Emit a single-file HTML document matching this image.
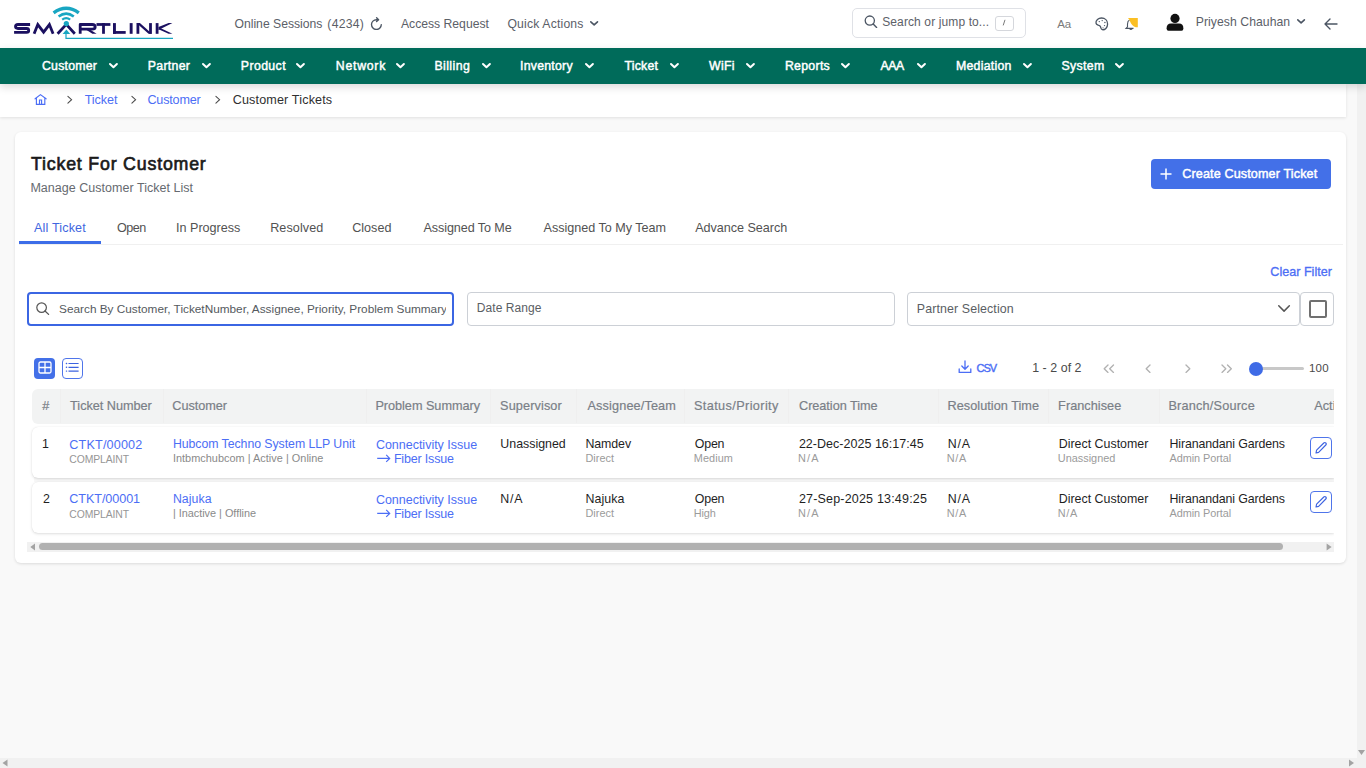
<!DOCTYPE html>
<html><head><meta charset="utf-8"><style>
html,body{margin:0;padding:0;width:1366px;height:768px;overflow:hidden;background:#f9f9f9;font-family:"Liberation Sans", sans-serif}
.a{position:absolute;display:block}
.t{position:absolute;white-space:pre;line-height:20px;height:20px;z-index:3}
svg.a{z-index:3}
</style></head><body>
<div class=a style='left:1357px;top:84px;width:9px;height:684px;background:#f1f1f1'></div><div class=a style='left:0;top:758px;width:1366px;height:10px;background:#f1f1f1'></div><svg class=a style='left:1357px;top:748px' width='9' height='8'><path d='M1 2 L8 2 L4.5 7 Z' fill='#a3a3a3'/></svg><svg class=a style='left:0;top:758px' width='10' height='10'><path d='M2.5 5 L7.5 1.5 L7.5 8.5 Z' fill='#a3a3a3'/></svg><svg class=a style='left:1346px;top:758px' width='10' height='10'><path d='M8 5 L3 1.5 L3 8.5 Z' fill='#a3a3a3'/></svg><div class=a style='left:0;top:0;width:1366px;height:48px;background:#fff'></div><div class=a style='left:0;top:48px;width:1366px;height:36px;background:#006b5a;box-shadow:0 3px 8px rgba(0,0,0,.15);z-index:2'></div><div class=a style='left:0;top:84px;width:1346px;height:33px;background:#fff;box-shadow:0 1px 3px rgba(0,0,0,.10)'></div><div class=a style='left:15px;top:132px;width:1331px;height:431px;background:#fff;border-radius:6px;box-shadow:0 1px 3px rgba(0,0,0,.12)'></div><svg class=a style='left:0;top:0' width='190' height='48' viewBox='0 0 190 48'>
<g fill='none' stroke='#1b1060' stroke-width='2.8' stroke-linejoin='round' stroke-linecap='butt'>
<path d='M30.1 24.5 H18 Q15.5 24.5 15.5 26.6 Q15.5 28.5 18 28.5 H26.6 Q28.7 28.5 28.7 30.5 Q28.7 32.4 26.6 32.4 H14.1'/>
<path d='M34.1 33.8 L37.8 24.6 L43.6 32.2 L49.4 24.6 L53.1 33.8' stroke-linejoin='miter' stroke-miterlimit='3'/>
<path d='M57.6 33.8 L66.3 24.4 L74.8 33.8'/>
<path d='M80.2 33.8 V24.5 H92.2 Q95.2 24.5 95.2 27 Q95.2 29.2 92.2 29.2 H81.5'/>
</g>
<g fill='#1b1060'>
<path d='M86.6 30 H90.6 L96.6 33.8 H92.4 Z'/>
<rect x='96.5' y='23.1' width='13.9' height='2.75'/><rect x='102.1' y='23.1' width='2.8' height='10.7'/>
<rect x='113' y='23.1' width='2.9' height='10.7'/><rect x='113' y='31.05' width='12.7' height='2.75'/>
<rect x='129.7' y='23.1' width='2.9' height='10.7'/>
<rect x='136.5' y='23.1' width='2.8' height='10.7'/><rect x='149.1' y='23.1' width='2.8' height='10.7'/>
<path d='M136.5 23.1 H139.9 L151.9 33.8 H148.5 Z'/>
<rect x='155.7' y='23.1' width='2.8' height='10.7'/>
<path d='M158.5 27.1 L168.6 23.1 H172.4 L158.5 29.9 Z'/>
<path d='M160.8 28.2 L172.4 33.8 H168.6 L158.5 29.2 Z'/>
</g>
<g fill='#19a6c2'>
<circle cx='66.3' cy='23.6' r='2.6'/>
<path d='M62.6 34 L66.4 29.6 L70.2 34 Z'/>
</g>
<g fill='none' stroke='#19a6c2' stroke-linecap='butt'>
<path d='M53.6 12.9 Q66.2 3.8 78.8 12.9' stroke-width='3.4'/>
<path d='M58.6 16.5 Q66.2 10.8 73.8 16.5' stroke-width='2.6'/>
<path d='M62.2 19.6 Q66.2 16.8 70.2 19.6' stroke-width='2.2'/>
<path d='M66 34 V38.3 H173' stroke-width='1.2'/>
</g></svg><svg class=a style='left:369px;top:15px' width='15' height='15' viewBox='0 0 15 15'><path d='M12.3 9.6 A4.9 4.9 0 1 1 7.4 4.7 H9.3 M7.6 2.8 L9.6 4.7 L7.6 6.6' fill='none' stroke='#4b5563' stroke-width='1.35' stroke-linecap='round' stroke-linejoin='round'/></svg><svg class=a style='left:588.50px;top:20.20px' width='10.3' height='6.7' viewBox='-1 -1 10.3 6.7'><path d='M0.8 0.8 L4.15 3.9000000000000004 L7.500000000000001 0.8' fill='none' stroke='#4b5563' stroke-width='1.6' stroke-linecap='round' stroke-linejoin='round'/></svg><div class=a style='left:852px;top:8px;width:172px;height:28px;border:1px solid #dfe1e6;border-radius:5px;background:#fff'></div><svg class=a style='left:864px;top:15px' width='14' height='13' viewBox='0 0 14 13'><circle cx='5.8' cy='5.6' r='4.6' fill='none' stroke='#4b5563' stroke-width='1.3'/><path d='M9.2 9 L12.6 12.4' stroke='#4b5563' stroke-width='1.4' stroke-linecap='round'/></svg><div class=a style='left:994.5px;top:15.5px;width:17px;height:13px;border:1px solid #d5d7dc;border-radius:3px;background:#fff'></div><svg class=a style='left:1000px;top:18px' width='8' height='9'><path d='M5 1.8 L3.2 7.4' stroke='#6a6a6a' stroke-width='0.9'/></svg><svg class=a style='left:1094px;top:17px' width='15' height='14' viewBox='0 0 15 14'>
<path d='M2 6.2 C1.5 3 4.5 1 7.5 1 C11 1 13.6 3.3 13.6 7 C13.6 10.7 10.8 13.2 8.3 12.7 C6.6 12.4 7.2 10.2 6 9 C4.6 7.6 2.3 8.5 2 6.2 Z' fill='none' stroke='#4b5563' stroke-width='1.3'/>
<circle cx='5.3' cy='4.6' r='.7' fill='#4b5563'/><circle cx='8.2' cy='3.6' r='.7' fill='#4b5563'/><circle cx='10.9' cy='5.5' r='.7' fill='#4b5563'/><circle cx='10.5' cy='8.6' r='.7' fill='#4b5563'/><circle cx='9' cy='10.8' r='.6' fill='#4b5563'/></svg><svg class=a style='left:1124px;top:16px' width='16' height='15' viewBox='0 0 16 15'>
<path d='M5.5 4 Q3.5 5 3.5 8.2 V10.8 L2 12.4 H9.5' fill='none' stroke='#4b5563' stroke-width='1.1'/>
<path d='M5.6 12.6 Q6.9 14.4 8.2 12.6' fill='none' stroke='#4b5563' stroke-width='1.1'/>
<path d='M4 1.9 H13.8 V11.3 H11.8 Q8 11 5.2 3.6 Z' fill='#fbbf24'/></svg><svg class=a style='left:1166px;top:13px' width='18' height='18' viewBox='0 0 18 18'>
<circle cx='9' cy='5.4' r='4.6' fill='#111'/><path d='M0.6 15.4 Q0.6 10.6 5 10.6 H13 Q17.4 10.6 17.4 15.4 Q17.4 17.8 15.6 17.8 H2.4 Q0.6 17.8 0.6 15.4 Z' fill='#111'/></svg><svg class=a style='left:1296.00px;top:18.30px' width='10.2' height='6.6' viewBox='-1 -1 10.2 6.6'><path d='M0.8 0.8 L4.1 3.8 L7.3999999999999995 0.8' fill='none' stroke='#4b5563' stroke-width='1.6' stroke-linecap='round' stroke-linejoin='round'/></svg><svg class=a style='left:1324px;top:18px' width='14' height='12' viewBox='0 0 14 12'><path d='M1 6 H13 M6 1 L1 6 L6 11' fill='none' stroke='#4b5563' stroke-width='1.4' stroke-linecap='round' stroke-linejoin='round'/></svg><svg class=a style='z-index:4;left:107.70px;top:62.00px' width='10.9' height='7.3' viewBox='-1 -1 10.9 7.3'><path d='M1.0 1.0 L4.45 4.3 L7.9 1.0' fill='none' stroke='#ffffff' stroke-width='2.0' stroke-linecap='round' stroke-linejoin='round'/></svg><svg class=a style='z-index:4;left:201.00px;top:62.00px' width='10.9' height='7.3' viewBox='-1 -1 10.9 7.3'><path d='M1.0 1.0 L4.45 4.3 L7.9 1.0' fill='none' stroke='#ffffff' stroke-width='2.0' stroke-linecap='round' stroke-linejoin='round'/></svg><svg class=a style='z-index:4;left:295.00px;top:62.00px' width='10.9' height='7.3' viewBox='-1 -1 10.9 7.3'><path d='M1.0 1.0 L4.45 4.3 L7.9 1.0' fill='none' stroke='#ffffff' stroke-width='2.0' stroke-linecap='round' stroke-linejoin='round'/></svg><svg class=a style='z-index:4;left:395.00px;top:62.00px' width='10.9' height='7.3' viewBox='-1 -1 10.9 7.3'><path d='M1.0 1.0 L4.45 4.3 L7.9 1.0' fill='none' stroke='#ffffff' stroke-width='2.0' stroke-linecap='round' stroke-linejoin='round'/></svg><svg class=a style='z-index:4;left:481.00px;top:62.00px' width='10.9' height='7.3' viewBox='-1 -1 10.9 7.3'><path d='M1.0 1.0 L4.45 4.3 L7.9 1.0' fill='none' stroke='#ffffff' stroke-width='2.0' stroke-linecap='round' stroke-linejoin='round'/></svg><svg class=a style='z-index:4;left:584.00px;top:62.00px' width='10.9' height='7.3' viewBox='-1 -1 10.9 7.3'><path d='M1.0 1.0 L4.45 4.3 L7.9 1.0' fill='none' stroke='#ffffff' stroke-width='2.0' stroke-linecap='round' stroke-linejoin='round'/></svg><svg class=a style='z-index:4;left:669.00px;top:62.00px' width='10.9' height='7.3' viewBox='-1 -1 10.9 7.3'><path d='M1.0 1.0 L4.45 4.3 L7.9 1.0' fill='none' stroke='#ffffff' stroke-width='2.0' stroke-linecap='round' stroke-linejoin='round'/></svg><svg class=a style='z-index:4;left:745.00px;top:62.00px' width='10.9' height='7.3' viewBox='-1 -1 10.9 7.3'><path d='M1.0 1.0 L4.45 4.3 L7.9 1.0' fill='none' stroke='#ffffff' stroke-width='2.0' stroke-linecap='round' stroke-linejoin='round'/></svg><svg class=a style='z-index:4;left:840.00px;top:62.00px' width='10.9' height='7.3' viewBox='-1 -1 10.9 7.3'><path d='M1.0 1.0 L4.45 4.3 L7.9 1.0' fill='none' stroke='#ffffff' stroke-width='2.0' stroke-linecap='round' stroke-linejoin='round'/></svg><svg class=a style='z-index:4;left:915.60px;top:62.00px' width='10.9' height='7.3' viewBox='-1 -1 10.9 7.3'><path d='M1.0 1.0 L4.45 4.3 L7.9 1.0' fill='none' stroke='#ffffff' stroke-width='2.0' stroke-linecap='round' stroke-linejoin='round'/></svg><svg class=a style='z-index:4;left:1022.00px;top:62.00px' width='10.9' height='7.3' viewBox='-1 -1 10.9 7.3'><path d='M1.0 1.0 L4.45 4.3 L7.9 1.0' fill='none' stroke='#ffffff' stroke-width='2.0' stroke-linecap='round' stroke-linejoin='round'/></svg><svg class=a style='z-index:4;left:1114.30px;top:62.00px' width='10.9' height='7.3' viewBox='-1 -1 10.9 7.3'><path d='M1.0 1.0 L4.45 4.3 L7.9 1.0' fill='none' stroke='#ffffff' stroke-width='2.0' stroke-linecap='round' stroke-linejoin='round'/></svg><svg class=a style='left:28px;top:88px' width='24' height='24' viewBox='0 0 24 24'>
<path d='M7.1 10.8 L12.45 6.6 L18.1 10.8 M8.4 10 V16.4 H16.8 V10 M11.5 16.4 V12 H13.6 V16.4' fill='none' stroke='#4c6ef5' stroke-width='1.15' stroke-linejoin='miter' stroke-linecap='round'/></svg><svg class=a style='left:66.5px;top:95px' width='6' height='10' viewBox='0 0 6 10'><path d='M0.9 1.3 L4.6 4.7 L0.9 8.2' fill='none' stroke='#4a4a4a' stroke-width='1.05' stroke-linecap='round'/></svg><svg class=a style='left:130.8px;top:95px' width='6' height='10' viewBox='0 0 6 10'><path d='M0.9 1.3 L4.6 4.7 L0.9 8.2' fill='none' stroke='#4a4a4a' stroke-width='1.05' stroke-linecap='round'/></svg><svg class=a style='left:215px;top:95px' width='6' height='10' viewBox='0 0 6 10'><path d='M0.9 1.3 L4.6 4.7 L0.9 8.2' fill='none' stroke='#4a4a4a' stroke-width='1.05' stroke-linecap='round'/></svg><div class=a style='left:1151px;top:159px;width:180px;height:30px;background:#4370e8;border-radius:4px'></div><svg class=a style='left:1160px;top:168px' width='12' height='12'><path d='M6 0.5 V11.5 M0.5 6 H11.5' stroke='#fff' stroke-width='1.5'/></svg><div class=a style='left:19px;top:244px;width:1324px;height:1px;background:#f0f0f0'></div><div class=a style='left:19px;top:241px;width:82px;height:3px;background:#3d6de8'></div><div class=a style='left:27px;top:291.5px;width:423px;height:30.5px;border:2px solid #3b66e3;border-radius:4px;background:#fff'></div><svg class=a style='left:36px;top:301.5px' width='14' height='14' viewBox='0 0 14 14'><circle cx='5.6' cy='5.6' r='4.8' fill='none' stroke='#555' stroke-width='1.2'/><path d='M9 9 L12.6 12.4' stroke='#555' stroke-width='1.3' stroke-linecap='round'/></svg><div class=a style='left:467px;top:291.5px;width:425.5px;height:32.5px;border:1px solid #ccd0d6;border-radius:4px;background:#fff'></div><div class=a style='left:906.5px;top:291.5px;width:391.5px;height:32.5px;border:1px solid #ccd0d6;border-radius:4px;background:#fff'></div><div class=a style='left:1300.2px;top:291.5px;width:31.6px;height:32.5px;border:1px solid #ccd0d6;border-radius:4px;background:#fff'></div><div class=a style='left:1309px;top:300px;width:14px;height:14px;border:2.2px solid #707070;border-radius:2px'></div><svg class=a style='left:1276.90px;top:303.90px' width='14.1' height='8.9' viewBox='-1 -1 14.1 8.9'><path d='M0.75 0.75 L6.05 6.15 L11.35 0.75' fill='none' stroke='#555' stroke-width='1.5' stroke-linecap='round' stroke-linejoin='round'/></svg><div class=a style='left:33.5px;top:357.7px;width:21.5px;height:21.5px;background:#4370e8;border-radius:4px'></div><svg class=a style='left:37.5px;top:361px' width='14' height='13' viewBox='0 0 14 13'><rect x='1' y='1' width='12' height='11' rx='1.5' fill='none' stroke='#fff' stroke-width='1.3'/><path d='M7 1 V12 M1 6.5 H13' stroke='#fff' stroke-width='1.3'/></svg><div class=a style='left:62px;top:358px;width:18.5px;height:19px;border:1px solid #4f75ea;border-radius:4px;background:#fff'></div><svg class=a style='left:65px;top:362px' width='15' height='11' viewBox='0 0 15 11'><path d='M1.4 1.5 H1.6 M1.4 5.3 H1.6 M1.4 9.1 H1.6' stroke='#3d63e0' stroke-width='1.4' stroke-linecap='round'/><path d='M3.5 1.5 H13.6 M3.5 5.3 H13.6 M3.5 9.1 H13.6' stroke='#3d63e0' stroke-width='1.2'/></svg><svg class=a style='left:958px;top:360px' width='14' height='14' viewBox='0 0 14 14'><path d='M7 1 V9 M3.8 6 L7 9.2 L10.2 6 M1.2 9 V12.4 H12.8 V9' fill='none' stroke='#4c6ef5' stroke-width='1.3' stroke-linecap='round' stroke-linejoin='round'/></svg><svg class=a style='left:1103.3px;top:364px' width='12' height='10' viewBox='0 0 12 10'><path d='M5 1 L1.2 4.7 L5 8.4 M10.5 1 L6.7 4.7 L10.5 8.4' fill='none' stroke='#b1b1b1' stroke-width='1.35' stroke-linecap='round' stroke-linejoin='round'/></svg><svg class=a style='left:1145px;top:364px' width='6' height='10' viewBox='0 0 6 10'><path d='M5 1 L1.2 4.7 L5 8.4' fill='none' stroke='#b1b1b1' stroke-width='1.35' stroke-linecap='round' stroke-linejoin='round'/></svg><svg class=a style='left:1185.3px;top:364px' width='6' height='10' viewBox='0 0 6 10'><path d='M1 1 L4.8 4.7 L1 8.4' fill='none' stroke='#b1b1b1' stroke-width='1.35' stroke-linecap='round' stroke-linejoin='round'/></svg><svg class=a style='left:1221px;top:364px' width='12' height='10' viewBox='0 0 12 10'><path d='M1 1 L4.8 4.7 L1 8.4 M6.5 1 L10.3 4.7 L6.5 8.4' fill='none' stroke='#b1b1b1' stroke-width='1.35' stroke-linecap='round' stroke-linejoin='round'/></svg><div class=a style='left:1256px;top:367px;width:48px;height:3px;background:#c8c8c8;border-radius:2px'></div><div class=a style='left:1248.6px;top:361.5px;width:14px;height:14px;background:#3f6be6;border-radius:50%'></div><div class=a style='left:32px;top:389px;width:1302px;height:34.5px;background:#f2f3f3;border-radius:6px 0 0 6px'></div><div class=a style='left:60px;top:389px;width:1px;height:34px;background:#efefef'></div><div class=a style='left:163px;top:389px;width:1px;height:34px;background:#efefef'></div><div class=a style='left:366px;top:389px;width:1px;height:34px;background:#efefef'></div><div class=a style='left:490px;top:389px;width:1px;height:34px;background:#efefef'></div><div class=a style='left:576px;top:389px;width:1px;height:34px;background:#efefef'></div><div class=a style='left:684px;top:389px;width:1px;height:34px;background:#efefef'></div><div class=a style='left:788px;top:389px;width:1px;height:34px;background:#efefef'></div><div class=a style='left:938px;top:389px;width:1px;height:34px;background:#efefef'></div><div class=a style='left:1048px;top:389px;width:1px;height:34px;background:#efefef'></div><div class=a style='left:1159px;top:389px;width:1px;height:34px;background:#efefef'></div><div class=a style='left:34px;top:477px;width:1300px;height:5px;background:#f8f8f8'></div><div class=a style='left:32px;top:427px;width:1302px;height:51px;background:#fff;border-radius:6px 0 0 6px;box-shadow:0 1px 3px rgba(0,0,0,.13),0 0 1px rgba(0,0,0,.10)'></div><div class=a style='left:32px;top:481.5px;width:1302px;height:51px;background:#fff;border-radius:6px 0 0 6px;box-shadow:0 1px 3px rgba(0,0,0,.13),0 0 1px rgba(0,0,0,.10)'></div><div class=a style='left:1334px;top:385px;width:11.5px;height:160px;background:#fff;z-index:5'></div><div class=a style='left:1310px;top:437px;width:20px;height:20px;border:1px solid #4f75ea;border-radius:4px;background:#fff'></div><svg class=a style='left:1313px;top:440px' width='16' height='16' viewBox='0 0 16 16'><path d='M3 13 L3.6 10.2 L10.8 3 Q11.8 2 12.8 3 Q13.8 4 12.8 5 L5.6 12.4 Z' fill='none' stroke='#3d63e0' stroke-width='1.15' stroke-linejoin='round'/></svg><div class=a style='left:1310px;top:491.3px;width:20px;height:20px;border:1px solid #4f75ea;border-radius:4px;background:#fff'></div><svg class=a style='left:1313px;top:494.3px' width='16' height='16' viewBox='0 0 16 16'><path d='M3 13 L3.6 10.2 L10.8 3 Q11.8 2 12.8 3 Q13.8 4 12.8 5 L5.6 12.4 Z' fill='none' stroke='#3d63e0' stroke-width='1.15' stroke-linejoin='round'/></svg><svg class=a style='left:376px;top:454px' width='16' height='10' viewBox='0 0 16 10'><path d='M1.2 4.4 H13.6 M10.2 0.9 L13.7 4.4 L10.2 7.9' fill='none' stroke='#4c6ef5' stroke-width='1.2'/></svg><svg class=a style='left:376px;top:508.7px' width='16' height='10' viewBox='0 0 16 10'><path d='M1.2 4.4 H13.6 M10.2 0.9 L13.7 4.4 L10.2 7.9' fill='none' stroke='#4c6ef5' stroke-width='1.2'/></svg><div class=a style='left:27px;top:542px;width:1307px;height:10px;background:#f1f1f1'></div><div class=a style='left:39px;top:543.2px;width:1244px;height:6.6px;background:#b1b1b1;border-radius:4px'></div><svg class=a style='left:28px;top:542px' width='10' height='10'><path d='M2.3 5 L7 1.6 L7 8.4 Z' fill='#a3a3a3'/></svg><svg class=a style='left:1323px;top:542px' width='10' height='10'><path d='M8.6 5 L3.6 1.6 L3.6 8.4 Z' fill='#a3a3a3'/></svg>
<div class=t style="left:234.50px;top:14.00px;font-size:12.2px;color:#5b6068;letter-spacing:-0.014px;">Online Sessions</div><div class=t style="left:327.30px;top:14.00px;font-size:12.2px;color:#5b6068;letter-spacing:0.28px;">(4234)</div><div class=t style="left:401.00px;top:14.00px;font-size:12.2px;color:#5b6068;letter-spacing:-0.015px;">Access Request</div><div class=t style="left:507.40px;top:14.00px;font-size:12.2px;color:#5b6068;letter-spacing:0.183px;">Quick Actions</div><div class=t style="left:882.20px;top:12.00px;font-size:12.0px;color:#5d6168;letter-spacing:0.116px;">Search or jump to...</div><div class=t style="left:1057.30px;top:14.00px;font-size:11.5px;color:#7a7a7a;letter-spacing:-0.2px;">Aa</div><div class=t style="left:1195.80px;top:12.00px;font-size:12.2px;color:#5b6068;letter-spacing:0.058px;">Priyesh Chauhan</div><div class=t style="left:42.00px;top:56.00px;font-size:12.3px;color:#ffffff;letter-spacing:0.228px;-webkit-text-stroke:0.45px #fff;">Customer</div><div class=t style="left:147.80px;top:56.00px;font-size:12.3px;color:#ffffff;letter-spacing:0.3px;-webkit-text-stroke:0.45px #fff;">Partner</div><div class=t style="left:240.80px;top:56.00px;font-size:12.3px;color:#ffffff;letter-spacing:0.4px;-webkit-text-stroke:0.45px #fff;">Product</div><div class=t style="left:335.80px;top:56.00px;font-size:12.3px;color:#ffffff;letter-spacing:0.734px;-webkit-text-stroke:0.45px #fff;">Network</div><div class=t style="left:434.40px;top:56.00px;font-size:12.3px;color:#ffffff;letter-spacing:0.434px;-webkit-text-stroke:0.45px #fff;">Billing</div><div class=t style="left:520.00px;top:56.00px;font-size:12.3px;color:#ffffff;letter-spacing:0.25px;-webkit-text-stroke:0.45px #fff;">Inventory</div><div class=t style="left:624.40px;top:56.00px;font-size:12.3px;color:#ffffff;letter-spacing:0.24px;-webkit-text-stroke:0.45px #fff;">Ticket</div><div class=t style="left:709.00px;top:56.00px;font-size:12.3px;color:#ffffff;letter-spacing:0.334px;-webkit-text-stroke:0.45px #fff;">WiFi</div><div class=t style="left:784.90px;top:56.00px;font-size:12.3px;color:#ffffff;letter-spacing:0.3px;-webkit-text-stroke:0.45px #fff;">Reports</div><div class=t style="left:880.40px;top:56.00px;font-size:12.3px;color:#ffffff;letter-spacing:-0.4px;-webkit-text-stroke:0.45px #fff;">AAA</div><div class=t style="left:956.00px;top:56.00px;font-size:12.3px;color:#ffffff;letter-spacing:0.25px;-webkit-text-stroke:0.45px #fff;">Mediation</div><div class=t style="left:1061.50px;top:56.00px;font-size:12.3px;color:#ffffff;letter-spacing:0.36px;-webkit-text-stroke:0.45px #fff;">System</div><div class=t style="left:84.70px;top:90.00px;font-size:12.6px;color:#4c6ef5;letter-spacing:-0.08px;">Ticket</div><div class=t style="left:147.40px;top:90.00px;font-size:12.6px;color:#4c6ef5;letter-spacing:-0.172px;">Customer</div><div class=t style="left:232.70px;top:90.00px;font-size:12.6px;color:#2f2f2f;letter-spacing:0.147px;">Customer Tickets</div><div class=t style="left:31.00px;top:154.00px;font-size:17.8px;color:#1a1a1a;letter-spacing:0.8px;-webkit-text-stroke:0.65px #1a1a1a;">Ticket For Customer</div><div class=t style="left:30.40px;top:178.00px;font-size:12.5px;color:#666a70;letter-spacing:0.03px;">Manage Customer Ticket List</div><div class=t style="left:34.00px;top:218.00px;font-size:12.6px;color:#3f66e0;letter-spacing:0.155px;">All Ticket</div><div class=t style="left:116.90px;top:218.00px;font-size:12.6px;color:#525252;letter-spacing:-0.466px;">Open</div><div class=t style="left:176.00px;top:218.00px;font-size:12.6px;color:#525252;">In Progress</div><div class=t style="left:270.20px;top:218.00px;font-size:12.6px;color:#525252;letter-spacing:0.086px;">Resolved</div><div class=t style="left:352.20px;top:218.00px;font-size:12.6px;color:#525252;">Closed</div><div class=t style="left:423.40px;top:218.00px;font-size:12.6px;color:#525252;letter-spacing:-0.076px;">Assigned To Me</div><div class=t style="left:543.60px;top:218.00px;font-size:12.6px;color:#525252;letter-spacing:-0.022px;">Assigned To My Team</div><div class=t style="left:695.20px;top:218.00px;font-size:12.6px;color:#525252;letter-spacing:-0.031px;">Advance Search</div><div class=t style="left:1182.20px;top:164.00px;font-size:12.6px;color:#ffffff;letter-spacing:0.133px;-webkit-text-stroke:0.45px #fff;">Create Customer Ticket</div><div class=t style="left:1270.30px;top:262.00px;font-size:12.6px;color:#4c6ef5;-webkit-text-stroke:0.3px #4c6ef5;">Clear Filter</div><div class=t style="left:59.10px;top:299.00px;font-size:11.8px;color:#555a60;width:387px;overflow:hidden;">Search By Customer, TicketNumber, Assignee, Priority, Problem Summary</div><div class=t style="left:476.70px;top:298.00px;font-size:12.0px;color:#5a5e64;letter-spacing:0.088px;">Date Range</div><div class=t style="left:916.80px;top:299.00px;font-size:12.4px;color:#5a5e64;letter-spacing:0.113px;">Partner Selection</div><div class=t style="left:976.40px;top:358.00px;font-size:11.0px;color:#4c6ef5;letter-spacing:-0.9px;-webkit-text-stroke:0.4px #4c6ef5;">CSV</div><div class=t style="left:1032.20px;top:358.00px;font-size:12.4px;color:#4a4a4a;letter-spacing:0.045px;">1 - 2 of 2</div><div class=t style="left:1309.00px;top:358.00px;font-size:11.5px;color:#4a4a4a;letter-spacing:0.2px;">100</div><div class=t style="left:42.30px;top:396.00px;font-size:12.7px;color:#7a7f87;letter-spacing:-0.6px;-webkit-text-stroke:0.2px #7a7f87;">#</div><div class=t style="left:70.10px;top:396.00px;font-size:12.7px;color:#7a7f87;letter-spacing:-0.033px;-webkit-text-stroke:0.2px #7a7f87;">Ticket Number</div><div class=t style="left:172.30px;top:396.00px;font-size:12.7px;color:#7a7f87;letter-spacing:-0.058px;-webkit-text-stroke:0.2px #7a7f87;">Customer</div><div class=t style="left:375.40px;top:396.00px;font-size:12.7px;color:#7a7f87;letter-spacing:-0.029px;-webkit-text-stroke:0.2px #7a7f87;">Problem Summary</div><div class=t style="left:500.10px;top:396.00px;font-size:12.7px;color:#7a7f87;letter-spacing:0.111px;-webkit-text-stroke:0.2px #7a7f87;">Supervisor</div><div class=t style="left:587.50px;top:396.00px;font-size:12.7px;color:#7a7f87;letter-spacing:0.133px;-webkit-text-stroke:0.2px #7a7f87;">Assignee/Team</div><div class=t style="left:694.00px;top:396.00px;font-size:12.7px;color:#7a7f87;letter-spacing:0.386px;-webkit-text-stroke:0.2px #7a7f87;">Status/Priority</div><div class=t style="left:799.00px;top:396.00px;font-size:12.7px;color:#7a7f87;letter-spacing:-0.034px;-webkit-text-stroke:0.2px #7a7f87;">Creation Time</div><div class=t style="left:947.60px;top:396.00px;font-size:12.7px;color:#7a7f87;letter-spacing:0.028px;-webkit-text-stroke:0.2px #7a7f87;">Resolution Time</div><div class=t style="left:1058.10px;top:396.00px;font-size:12.7px;color:#7a7f87;letter-spacing:0.045px;-webkit-text-stroke:0.2px #7a7f87;">Franchisee</div><div class=t style="left:1168.40px;top:396.00px;font-size:12.7px;color:#7a7f87;letter-spacing:0.2px;-webkit-text-stroke:0.2px #7a7f87;">Branch/Source</div><div class=t style="left:1314.30px;top:396.00px;font-size:12.7px;color:#7a7f87;-webkit-text-stroke:0.2px #7a7f87;width:20px;overflow:hidden;">Action</div><div class=t style="left:41.90px;top:434.00px;font-size:12.4px;color:#1f1f1f;">1</div><div class=t style="left:69.30px;top:435.00px;font-size:12.6px;color:#4c6ef5;letter-spacing:0.178px;">CTKT/00002</div><div class=t style="left:69.30px;top:450.00px;font-size:10.4px;color:#969696;letter-spacing:-0.1px;">COMPLAINT</div><div class=t style="left:172.90px;top:434.00px;font-size:12.3px;color:#4c6ef5;letter-spacing:-0.043px;">Hubcom Techno System LLP Unit</div><div class=t style="left:172.90px;top:448.00px;font-size:10.9px;color:#8a8a8a;letter-spacing:0.028px;">Intbmchubcom | Active | Online</div><div class=t style="left:375.90px;top:435.00px;font-size:12.5px;color:#4c6ef5;letter-spacing:-0.011px;">Connectivity Issue</div><div class=t style="left:393.90px;top:449.00px;font-size:12.5px;color:#4c6ef5;letter-spacing:-0.18px;">Fiber Issue</div><div class=t style="left:500.30px;top:434.00px;font-size:12.4px;color:#1f1f1f;">Unassigned</div><div class=t style="left:585.40px;top:434.00px;font-size:12.4px;color:#1f1f1f;letter-spacing:-0.08px;">Namdev</div><div class=t style="left:585.40px;top:448.00px;font-size:10.9px;color:#9b9b9b;letter-spacing:0.04px;">Direct</div><div class=t style="left:694.80px;top:434.00px;font-size:12.4px;color:#1f1f1f;letter-spacing:-0.2px;">Open</div><div class=t style="left:693.80px;top:448.00px;font-size:10.9px;color:#9b9b9b;letter-spacing:0.08px;">Medium</div><div class=t style="left:798.90px;top:434.00px;font-size:12.5px;color:#1f1f1f;letter-spacing:0.021px;">22-Dec-2025 16:17:45</div><div class=t style="left:797.90px;top:448.00px;font-size:10.9px;color:#9b9b9b;letter-spacing:1.2px;">N/A</div><div class=t style="left:947.80px;top:434.00px;font-size:12.4px;color:#1f1f1f;letter-spacing:0.8px;">N/A</div><div class=t style="left:946.80px;top:448.00px;font-size:10.9px;color:#9b9b9b;letter-spacing:0.7px;">N/A</div><div class=t style="left:1058.80px;top:434.00px;font-size:12.4px;color:#1f1f1f;">Direct Customer</div><div class=t style="left:1057.80px;top:448.00px;font-size:10.9px;color:#9b9b9b;">Unassigned</div><div class=t style="left:1169.50px;top:434.00px;font-size:12.4px;color:#1f1f1f;letter-spacing:-0.123px;">Hiranandani Gardens</div><div class=t style="left:1169.50px;top:448.00px;font-size:10.9px;color:#9b9b9b;letter-spacing:-0.054px;">Admin Portal</div><div class=t style="left:42.90px;top:489.00px;font-size:12.4px;color:#1f1f1f;">2</div><div class=t style="left:69.30px;top:489.00px;font-size:12.6px;color:#4c6ef5;letter-spacing:-0.066px;">CTKT/00001</div><div class=t style="left:69.30px;top:505.00px;font-size:10.4px;color:#969696;letter-spacing:-0.1px;">COMPLAINT</div><div class=t style="left:172.90px;top:489.00px;font-size:12.3px;color:#4c6ef5;letter-spacing:0.08px;">Najuka</div><div class=t style="left:172.90px;top:503.00px;font-size:10.9px;color:#8a8a8a;letter-spacing:-0.021px;">| Inactive | Offline</div><div class=t style="left:375.90px;top:490.00px;font-size:12.5px;color:#4c6ef5;letter-spacing:-0.011px;">Connectivity Issue</div><div class=t style="left:393.90px;top:504.00px;font-size:12.5px;color:#4c6ef5;letter-spacing:-0.18px;">Fiber Issue</div><div class=t style="left:500.30px;top:489.00px;font-size:12.4px;color:#1f1f1f;letter-spacing:0.8px;">N/A</div><div class=t style="left:585.40px;top:489.00px;font-size:12.4px;color:#1f1f1f;letter-spacing:0.08px;">Najuka</div><div class=t style="left:585.40px;top:503.00px;font-size:10.9px;color:#9b9b9b;letter-spacing:0.04px;">Direct</div><div class=t style="left:694.80px;top:489.00px;font-size:12.4px;color:#1f1f1f;letter-spacing:-0.2px;">Open</div><div class=t style="left:693.80px;top:503.00px;font-size:10.9px;color:#9b9b9b;letter-spacing:-0.133px;">High</div><div class=t style="left:798.90px;top:489.00px;font-size:12.5px;color:#1f1f1f;letter-spacing:0.189px;">27-Sep-2025 13:49:25</div><div class=t style="left:797.90px;top:503.00px;font-size:10.9px;color:#9b9b9b;letter-spacing:1.2px;">N/A</div><div class=t style="left:947.80px;top:489.00px;font-size:12.4px;color:#1f1f1f;letter-spacing:0.8px;">N/A</div><div class=t style="left:946.80px;top:503.00px;font-size:10.9px;color:#9b9b9b;letter-spacing:0.7px;">N/A</div><div class=t style="left:1058.80px;top:489.00px;font-size:12.4px;color:#1f1f1f;">Direct Customer</div><div class=t style="left:1057.80px;top:503.00px;font-size:10.9px;color:#9b9b9b;letter-spacing:0.7px;">N/A</div><div class=t style="left:1169.50px;top:489.00px;font-size:12.4px;color:#1f1f1f;letter-spacing:-0.123px;">Hiranandani Gardens</div><div class=t style="left:1169.50px;top:503.00px;font-size:10.9px;color:#9b9b9b;letter-spacing:-0.054px;">Admin Portal</div>
</body></html>
